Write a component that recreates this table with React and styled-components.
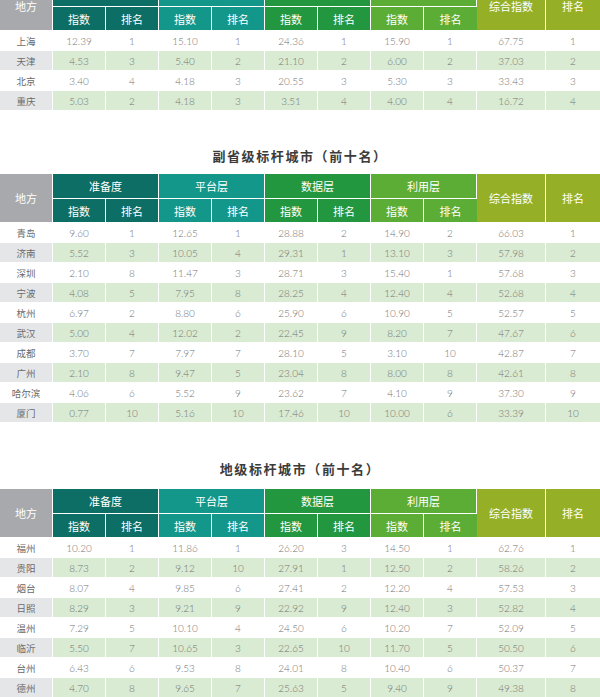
import React from 'react';
import styled, { createGlobalStyle } from 'styled-components';

const GlobalStyle = createGlobalStyle`
  body {
    margin: 0;
    background: #ffffff;
    font-family: Lato, "Noto Sans CJK SC", sans-serif;
    overflow: hidden;
  }
`;

const Page = styled.div`
  width: 600px;
`;

const groups = [
  { name: '准备度', color: '#0c6e64' },
  { name: '平台层', color: '#14978b' },
  { name: '数据层', color: '#22973f' },
  { name: '利用层', color: '#5bad35' },
];

const TOTAL = '#95af27';
const PLACE = '#a7a9ac';

const Section = styled.section`
  margin-top: ${({ $cut }) => ($cut ? '-18px' : '0')};
`;

const Title = styled.h2`
  margin: 0;
  padding: ${({ $top }) => $top}px 0 ${({ $bottom }) => $bottom}px;
  text-align: center;
  font-family: "Noto Sans CJK SC", sans-serif;
  font-size: 13px;
  line-height: 18px;
  font-weight: 700;
  letter-spacing: 1.6px;
  color: #3b3b3b;
`;

const Table = styled.table`
  width: 600px;
  table-layout: fixed;
  border-collapse: separate;
  border-spacing: 0;
`;

const Head = styled.th`
  background: ${({ $bg }) => $bg};
  color: #ffffff;
  font-family: "Noto Sans CJK SC", sans-serif;
  font-weight: 400;
  font-size: 11px;
  height: ${({ $h }) => $h}px;
  padding: 0;
  border-right: 1px solid #ffffff;
  border-bottom: 1px solid #ffffff;
  text-align: center;
  box-sizing: border-box;
  &:last-child {
    border-right: 0;
  }
`;

const Cell = styled.td`
  background: ${({ $bg }) => $bg};
  color: #747474;
  font-size: 10px;
  font-weight: 300;
  height: 20px;
  padding: 0;
  text-align: center;
  border-right: 1px solid #ffffff;
  border-bottom: 1px solid #ffffff;
  box-sizing: border-box;
  &:last-child {
    border-right: 0;
  }
`;

const PlaceCell = styled(Cell)`
  font-family: "Noto Sans CJK SC", sans-serif;
  font-weight: 400;
  font-size: 9.5px;
  color: #6a6a6a;
`;

const widths = [53, 53, 53, 53, 53, 53, 53, 53, 53, 69, 54];

function DataTable({ rows }) {
  return (
    <Table>
      <colgroup>
        {widths.map((w, i) => (
          <col key={i} style={{ width: w }} />
        ))}
      </colgroup>
      <thead>
        <tr>
          <Head rowSpan={2} $bg={PLACE}>地方</Head>
          {groups.map(g => (
            <Head key={g.name} colSpan={2} $bg={g.color} $h={25}>{g.name}</Head>
          ))}
          <Head rowSpan={2} $bg={TOTAL}>综合指数</Head>
          <Head rowSpan={2} $bg={TOTAL}>排名</Head>
        </tr>
        <tr>
          {groups.map(g => (
            <React.Fragment key={g.name}>
              <Head $bg={g.color} $h={24}>指数</Head>
              <Head $bg={g.color} $h={24}>排名</Head>
            </React.Fragment>
          ))}
        </tr>
      </thead>
      <tbody>
        {rows.map((r, i) => {
          const odd = i % 2 === 1;
          return (
            <tr key={r[0]}>
              <PlaceCell $bg={odd ? '#e5e6e8' : '#ffffff'}>{r[0]}</PlaceCell>
              {r.slice(1).map((v, j) => (
                <Cell key={j} $bg={odd ? '#d9ebd2' : '#ffffff'}>{v}</Cell>
              ))}
            </tr>
          );
        })}
      </tbody>
    </Table>
  );
}

const municipal = [
  ['上海', '12.39', 1, '15.10', 1, '24.36', 1, '15.90', 1, '67.75', 1],
  ['天津', '4.53', 3, '5.40', 2, '21.10', 2, '6.00', 2, '37.03', 2],
  ['北京', '3.40', 4, '4.18', 3, '20.55', 3, '5.30', 3, '33.43', 3],
  ['重庆', '5.03', 2, '4.18', 3, '3.51', 4, '4.00', 4, '16.72', 4],
];

const subProvincial = [
  ['青岛', '9.60', 1, '12.65', 1, '28.88', 2, '14.90', 2, '66.03', 1],
  ['济南', '5.52', 3, '10.05', 4, '29.31', 1, '13.10', 3, '57.98', 2],
  ['深圳', '2.10', 8, '11.47', 3, '28.71', 3, '15.40', 1, '57.68', 3],
  ['宁波', '4.08', 5, '7.95', 8, '28.25', 4, '12.40', 4, '52.68', 4],
  ['杭州', '6.97', 2, '8.80', 6, '25.90', 6, '10.90', 5, '52.57', 5],
  ['武汉', '5.00', 4, '12.02', 2, '22.45', 9, '8.20', 7, '47.67', 6],
  ['成都', '3.70', 7, '7.97', 7, '28.10', 5, '3.10', 10, '42.87', 7],
  ['广州', '2.10', 8, '9.47', 5, '23.04', 8, '8.00', 8, '42.61', 8],
  ['哈尔滨', '4.06', 6, '5.52', 9, '23.62', 7, '4.10', 9, '37.30', 9],
  ['厦门', '0.77', 10, '5.16', 10, '17.46', 10, '10.00', 6, '33.39', 10],
];

const prefecture = [
  ['福州', '10.20', 1, '11.86', 1, '26.20', 3, '14.50', 1, '62.76', 1],
  ['贵阳', '8.73', 2, '9.12', 10, '27.91', 1, '12.50', 2, '58.26', 2],
  ['烟台', '8.07', 4, '9.85', 6, '27.41', 2, '12.20', 4, '57.53', 3],
  ['日照', '8.29', 3, '9.21', 9, '22.92', 9, '12.40', 3, '52.82', 4],
  ['温州', '7.29', 5, '10.10', 4, '24.50', 6, '10.20', 7, '52.09', 5],
  ['临沂', '5.50', 7, '10.65', 3, '22.65', 10, '11.70', 5, '50.50', 6],
  ['台州', '6.43', 6, '9.53', 8, '24.01', 8, '10.40', 6, '50.37', 7],
  ['德州', '4.70', 8, '9.65', 7, '25.63', 5, '9.40', 9, '49.38', 8],
  ['潍坊', '6.12', 9, '8.90', 11, '24.30', 7, '9.80', 8, '49.12', 9],
];

export default function App() {
  return (
    <Page>
      <GlobalStyle />
      <Section $cut>
        <DataTable rows={municipal} />
      </Section>
      <Section>
        <Title $top={36} $bottom={9}>副省级标杆城市（前十名）</Title>
        <DataTable rows={subProvincial} />
      </Section>
      <Section>
        <Title $top={37} $bottom={11}>地级标杆城市（前十名）</Title>
        <DataTable rows={prefecture} />
      </Section>
    </Page>
  );
}
